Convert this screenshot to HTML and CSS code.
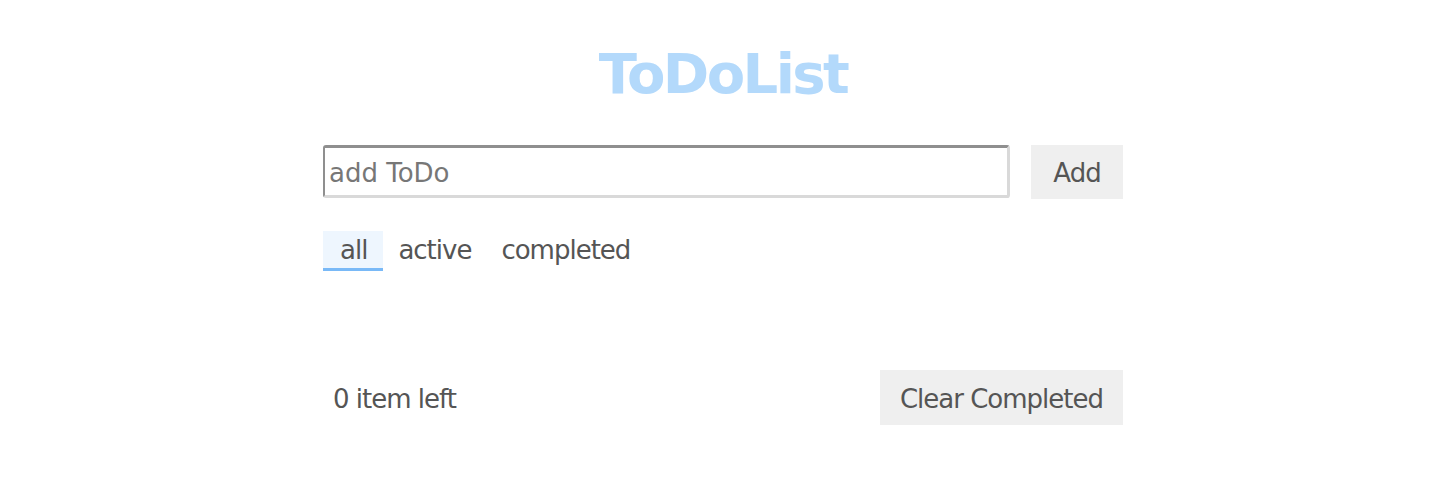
FILE: index.html
```html
<!DOCTYPE html>
<html>
<head>
<meta charset="utf-8">
<link rel="stylesheet" href="styles.css">
</head>
<body>
<div class="app">
  <h1 class="title">ToDoList</h1>
  <div class="add-row">
    <input class="todo-input" type="text" placeholder="add ToDo">
    <button class="btn add-btn">Add</button>
  </div>
  <div class="filters">
    <span class="filter active-filter">all</span>
    <span class="filter">active</span>
    <span class="filter">completed</span>
  </div>
  <ul class="list"></ul>
  <div class="footer">
    <span class="count">0 item left</span>
    <button class="btn clear-btn">Clear Completed</button>
  </div>
</div>
</body>
</html>
```

FILE: styles.css
```css
html, body {
  margin: 0;
  padding: 0;
  background: #fff;
}
body {
  font-family: "DejaVu Sans", Verdana, sans-serif;
  color: #555;
}
.app {
  width: 800px;
  margin: 0 auto;
  padding-top: 38px;
}
.title {
  margin: 0;
  text-align: center;
  font-size: 56px;
  font-weight: bold;
  color: #b3d9fb;
  line-height: 72px;
  letter-spacing: -2.6px;
}
.add-row {
  display: flex;
  gap: 21px;
  margin-top: 35px;
}
.todo-input {
  flex: 1;
  box-sizing: border-box;
  height: 53px;
  border-style: solid;
  border-width: 3px 3px 3px 2px;
  border-color: #8f8f8f #d9d9d9 #d9d9d9 #8f8f8f;
  border-radius: 3px;
  padding: 3px 4px 0;
  font-family: inherit;
  font-size: 26px;
  letter-spacing: 0;
  color: #555;
  outline: none;
}
.todo-input::placeholder {
  color: #777;
}
.btn {
  border: none;
  background: #efefef;
  color: #555;
  font-family: inherit;
  font-size: 26px;
  letter-spacing: -1px;
  padding: 2px 20px 0;
  height: 54px;
}
.add-btn {
  width: 92px;
  padding: 2px 0 0;
}
.filters {
  display: flex;
  margin-top: 32px;
}
.filter {
  font-size: 26px;
  letter-spacing: -1px;
  line-height: 36px;
  padding: 1px 15px 0;
  border-bottom: 3px solid transparent;
}
.active-filter {
  padding: 1px 16px 0 17px;
  background: #eef6fe;
  border-bottom-color: #79b9f7;
}
.list {
  margin: 0;
  padding: 0;
  list-style: none;
  height: 99px;
}
.footer {
  display: flex;
  justify-content: space-between;
  align-items: center;
}
.count {
  font-size: 26px;
  letter-spacing: -1px;
  padding-left: 10px;
  padding-top: 2px;
}
.clear-btn {
  height: 55px;
}
```
